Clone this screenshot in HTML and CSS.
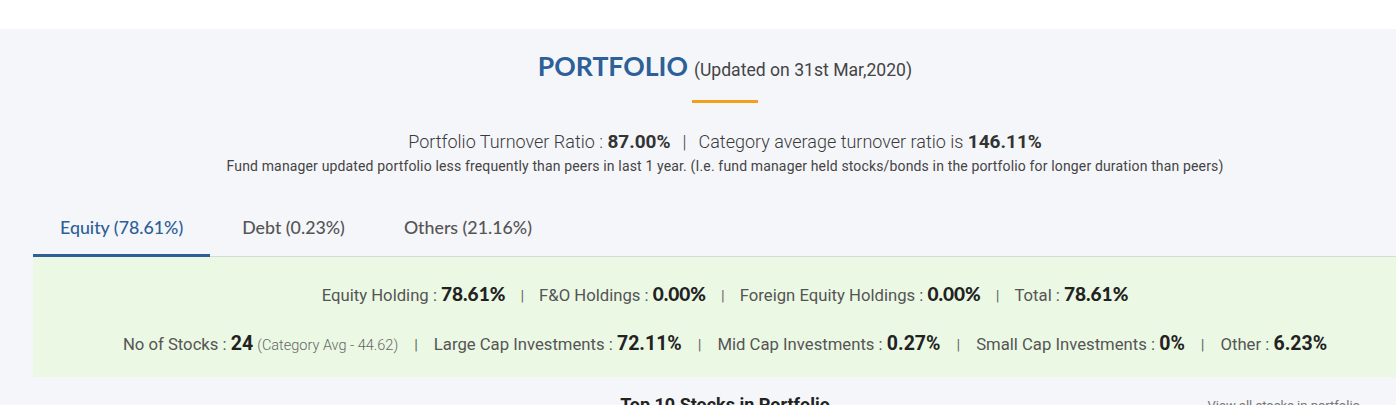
FILE: index.html
```html
<!DOCTYPE html>
<html>
<head>
<meta charset="utf-8">
<link rel="stylesheet" href="styles.css">
</head>
<body>
<div class="topbar"></div>
<section class="portfolio">
  <div class="inner">
    <h2 class="title"><span class="title-main">PORTFOLIO</span> <span class="title-sub">(Updated on 31st Mar,2020)</span></h2>
    <div class="accent"></div>
    <p class="turnover">Portfolio Turnover Ratio : <b>87.00%</b><span class="pipe">|</span>Category average turnover ratio is <b>146.11%</b></p>
    <p class="note">Fund manager updated portfolio less frequently than peers in last 1 year. (I.e. fund manager held stocks/bonds in the portfolio for longer duration than peers)</p>
    <div class="tabs">
      <div class="tab active">Equity (78.61%)</div>
      <div class="tab">Debt (0.23%)</div>
      <div class="tab">Others (21.16%)</div>
    </div>
    <div class="panel">
      <div class="row row1">
        <span class="item">Equity Holding : <b>78.61%</b></span><span class="sep">|</span>
        <span class="item">F&amp;O Holdings : <b>0.00%</b></span><span class="sep">|</span>
        <span class="item">Foreign Equity Holdings : <b>0.00%</b></span><span class="sep">|</span>
        <span class="item">Total : <b>78.61%</b></span>
      </div>
      <div class="row row2">
        <span class="item">No of Stocks : <b>24</b> <small>(Category Avg - 44.62)</small></span><span class="sep">|</span>
        <span class="item">Large Cap Investments : <b>72.11%</b></span><span class="sep">|</span>
        <span class="item">Mid Cap Investments : <b>0.27%</b></span><span class="sep">|</span>
        <span class="item">Small Cap Investments : <b>0%</b></span><span class="sep">|</span>
        <span class="item">Other : <b>6.23%</b></span>
      </div>
    </div>
    <div class="sub-head">
      <h3 class="top10">Top 10 Stocks in Portfolio</h3>
      <span class="side-note">View all stocks in portfolio</span>
    </div>
  </div>
</section>
</body>
</html>
```
FILE: styles.css
```css
html, body {
  margin: 0;
  padding: 0;
  overflow: hidden;
  background: #ffffff;
}
body {
  width: 1396px;
  height: 405px;
  font-family: Roboto, "Liberation Sans", sans-serif;
}
.topbar {
  height: 29px;
  background: #ffffff;
}
.portfolio {
  background: #f5f6fa;
  width: 1450px;
  padding: 0 0 40px;
}
.inner {
  padding: 0 0 0 33px;
  display: flex;
  flex-direction: column;
}
.title {
  margin: 20px 0 0;
  text-align: center;
  line-height: 34px;
  padding-right: 33px;
}
.title-main {
  font-family: Lato, sans-serif;
  font-weight: 700;
  font-size: 26.6px;
  color: #2d5f98;
}
.title-sub {
  font-family: Roboto, sans-serif;
  font-weight: 400;
  font-size: 17.6px;
  color: #444;
}
.accent {
  width: 66px;
  height: 3px;
  background: #f2a01a;
  align-self: center;
  margin: 13px 33px 0 0;
}
.turnover {
  margin: 27px 0 0;
  padding-right: 33px;
  text-align: center;
  font-size: 18px;
  line-height: 24px;
  color: #3a3a3a;
  font-weight: 300;
}
.turnover b {
  font-weight: 700;
  font-size: 19px;
  color: #333;
}
.turnover .pipe {
  margin: 0 12px;
}
.note {
  margin: 3px 0 0;
  padding-right: 33px;
  text-align: center;
  font-size: 14px;
  letter-spacing: 0.15px;
  line-height: 18px;
  color: #444;
}
.tabs {
  display: flex;
  margin-top: 33px;
  border-bottom: 1px solid #d6dbd6;
}
.tab {
  font-family: Lato, sans-serif;
  font-size: 17.8px;
  font-weight: 500;
  color: #555;
  padding: 8px 27px 16px;
  margin-right: 5px;
  border-bottom: 3px solid transparent;
  margin-bottom: -1px;
}
.tab.active {
  color: #2d5f98;
  border-bottom-color: #2d5f98;
}
.panel {
  background: #ebf8e4;
  padding: 25px 33px 19px 0;
  display: flex;
  flex-direction: column;
  gap: 24px;
}
.row {
  display: flex;
  justify-content: center;
  align-items: baseline;
  font-size: 16.7px;
  color: #555;
  line-height: 24px;
}
.row b {
  color: #222;
  font-size: 19.5px;
  font-weight: 700;
}
.row1 b {
  font-family: Lato, sans-serif;
  font-weight: 900;
  font-size: 19px;
}
.row1 .sep {
  margin: 0 15px;
}
.row small {
  font-size: 14.5px;
  font-weight: 300;
  color: #666;
}
.sep {
  margin: 0 16px;
  font-size: 15px;
  color: #666;
}
.sub-head {
  display: flex;
  justify-content: center;
  position: relative;
  margin-top: 17px;
  padding-right: 33px;
}
.top10 {
  margin: 0;
  font-size: 18px;
  font-weight: 700;
  color: #222;
}
.side-note {
  position: absolute;
  right: 90px;
  top: 4px;
  font-size: 13px;
  color: #777;
}
```
